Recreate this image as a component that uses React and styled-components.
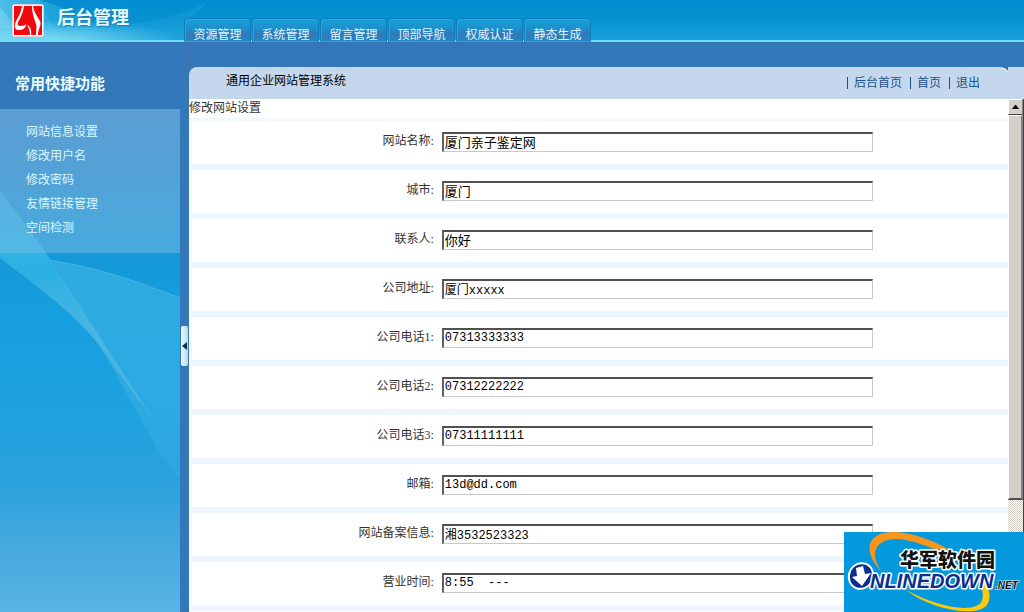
import React from "react";
import styled, { createGlobalStyle } from "styled-components";

const GlobalStyle = createGlobalStyle`
    * {
        box-sizing: border-box;
    }

    body {
        margin: 0;
        overflow: hidden;
        background: #3377b9;
        font-family: "Liberation Serif", "Noto Sans CJK SC", serif;
        font-size: 12px;
        line-height: 16px;
    }

    a {
        color: inherit;
        text-decoration: none;
    }
`;

const Page = styled.div`
    display: flex;
    flex-direction: column;
    height: 100vh;
`;

const Header = styled.header`
    position: relative;
    display: flex;
    flex: none;
    height: 42px;
    background: linear-gradient(#008ccf, #0892d3 50%, #18a2db);
    border-bottom: 2px solid #6fdcf8;
`;

const HeaderArt = styled.svg`
    position: absolute;
    top: 0;
    left: 0;
`;

const Brand = styled.div`
    position: relative;
    display: flex;
    gap: 12px;
    width: 184px;
    padding: 4px 0 0 12px;
`;

const BrandName = styled.h1`
    margin: 0;
    color: #e8fbff;
    font-size: 18px;
    line-height: 28px;
    font-weight: bold;
    text-shadow: 1px 1px 1px #1a7fb8;
`;

const Tabs = styled.nav`
    position: relative;
    display: flex;
    gap: 1px;
    height: 42px;
    padding-top: 18px;
`;

const Tab = styled.a`
    width: 67px;
    height: 24px;
    padding-top: 8px;
    border: 1px solid #0c7fbd;
    border-bottom-color: #2ba6d6;
    border-radius: 3px 3px 0 0;
    box-shadow: inset 1px 1px 0 #24a8d8;
    background: linear-gradient(#149fd6, #1f8fcc 45%, #3377b9 70%, #2487c4);
    color: #dff8ff;
    text-align: center;
`;

const Body = styled.div`
    display: flex;
    flex: 1;
    min-height: 0;
`;

const Sidebar = styled.aside`
    position: relative;
    flex: none;
    width: 180px;
    background: #3377b9;
`;

const SidebarArt = styled.svg`
    position: absolute;
    top: 67px;
    left: 0;
    width: 180px;
    height: calc(100% - 67px);
`;

const SidebarTitle = styled.h2`
    position: relative;
    height: 67px;
    margin: 0;
    padding: 30px 0 0 15px;
    color: #e8fbff;
    font-size: 15px;
    line-height: 24px;
`;

const Menu = styled.ul`
    position: relative;
    height: 144px;
    margin: 0;
    padding: 11px 0 0 26px;
    background: linear-gradient(#5b9dd3, rgba(120, 190, 228, 0.5));
    color: #d8f8ff;
    line-height: 24px;
    list-style: none;
`;

const Divider = styled.div`
    display: flex;
    flex: none;
    align-items: center;
    width: 9px;
    padding: 38px 0 0 1px;
    background: linear-gradient(90deg, #2f78c0, #3a76ae);
`;

const Collapse = styled.button`
    width: 7px;
    height: 40px;
    padding: 0;
    border: 0;
    border-radius: 2px;
    background: linear-gradient(90deg, #f0faff, #b5d8ee);
    line-height: 0;
`;

const Content = styled.main`
    display: flex;
    flex: 1;
    flex-direction: column;
    min-width: 0;
    padding-top: 25px;
`;

const TitleBar = styled.div`
    position: relative;
    display: flex;
    flex: none;
    justify-content: space-between;
    height: 32px;
    padding: 6px 44px 0 37px;
    border-top-left-radius: 8px;
    background: #c4d7ed;
`;

const TitleText = styled.h3`
    margin: 0;
    font-size: 12px;
    font-weight: normal;
`;

const Corner = styled.svg`
    position: absolute;
    top: 0;
    right: 16px;
`;

const QuickLinks = styled.nav`
    display: flex;
    gap: 8px;
    padding-top: 2px;
    color: #1d5288;

    a::before {
        content: "";
        display: inline-block;
        width: 1px;
        height: 12px;
        margin-right: 6px;
        background: #1d5288;
        vertical-align: -2px;
    }
`;

const Pane = styled.div`
    display: flex;
    flex: 1;
    min-height: 0;
    background: #fff;
`;

const Form = styled.form`
    flex: 1;
    overflow: hidden;
`;

const Caption = styled.div`
    height: 22px;
    border-bottom: 3px solid #f1f9fd;
    color: #333;
    line-height: 18px;
`;

const Rows = styled.div`
    border-left: 3px solid #f1f9fe;
`;

const Row = styled.div`
    display: grid;
    grid-template-columns: 30% 1fr;
    align-items: start;
    height: 49px;
    padding-top: 11px;
    border-bottom: 6px solid #edf5fd;
`;

const Label = styled.label`
    padding-right: 3px;
    color: #333;
    line-height: 18px;
    text-align: right;
`;

const Field = styled.input`
    width: 431px;
    max-width: 100%;
    height: 20px;
    margin-left: 5px;
    padding: 0 1px 2px;
    border: solid;
    border-width: 2px 1px 1px 2px;
    border-color: #505050 #c8c8c8 #c8c8c8 #606060;
    border-radius: 0;
    outline: 0;
    background: #fff;
    color: #000;
    font-family: "Liberation Mono", "Noto Sans CJK SC", monospace;
    font-size: ${props => (props.$hanzi ? "13px" : "12px")};
`;

const Scrollbar = styled.div`
    display: flex;
    flex: none;
    flex-direction: column;
    width: 16px;
    border-right: 1px solid #404040;
    background: repeating-conic-gradient(#d4d0c8 0 25%, #fff 0 50%) 0 0 / 2px 2px;
`;

const ScrollButton = styled.button`
    height: 16px;
    padding: 0;
    border: 1px solid;
    border-color: #fff #808080 #404040 #fff;
    background: #d4d0c8;
    line-height: 0;
`;

const Thumb = styled.div`
    height: 75%;
    border: solid;
    border-width: 1px 2px 2px 1px;
    border-color: #fff #808080 #505050 #fff;
    background: #d4d0c8;
`;

const Badge = styled.svg`
    position: fixed;
    right: 0;
    bottom: 0;
`;

const tabs = ["资源管理", "系统管理", "留言管理", "顶部导航", "权威认证", "静态生成"];

const menu = ["网站信息设置", "修改用户名", "修改密码", "友情链接管理", "空间检测"];

const fields = [
    { id: "name", label: "网站名称", value: "厦门亲子鉴定网" },
    { id: "city", label: "城市", value: "厦门" },
    { id: "contact", label: "联系人", value: "你好" },
    { id: "address", label: "公司地址", value: "厦门xxxxx" },
    { id: "tel1", label: "公司电话1", value: "07313333333" },
    { id: "tel2", label: "公司电话2", value: "07312222222" },
    { id: "tel3", label: "公司电话3", value: "07311111111" },
    { id: "email", label: "邮箱", value: "13d@dd.com" },
    { id: "record", label: "网站备案信息", value: "湘3532523323" },
    { id: "hours", label: "营业时间", value: "8:55  ---" }
];

const Logo = () => (
    <svg width="33" height="34" viewBox="0 0 33 34">
        <rect x="0.5" y="0.5" width="31" height="32" rx="2" fill="#fff" stroke="#e3cfd6" />
        <rect x="2" y="2" width="28" height="29" fill="#f00a0e" />
        <path
            d="M10 2h2C11 9 9 13 6 18c-1 3 0 4 3 4 2 0 4-1 5-2 0 4-3 6-7 6-3 0-5-2-4-6 2-6 6-10 7-18z"
            fill="#fff"
        />
        <path d="M20 2h1c1 6 4 10 7 15 2 4-2 8-2 14h-2c0-5 1-8 0-11-2-6-4-11-4-18z" fill="#fff" />
        <path d="M15 21c3 1 5 5 4 10h-1c0-4-1-7-3-10z" fill="#fff" />
    </svg>
);

const HeaderSwirl = () => (
    <HeaderArt width="260" height="40" viewBox="0 0 260 40">
        <defs>
            <linearGradient id="glow" x1="0" y1="0" x2="1" y2="0">
                <stop offset="0" stopColor="#7fdcf5" stopOpacity="0.6" />
                <stop offset="0.5" stopColor="#52c8ec" stopOpacity="0.6" />
                <stop offset="1" stopColor="#3fbce6" stopOpacity="0.5" />
            </linearGradient>
            <radialGradient id="floor" cx="0.3" cy="1" r="0.7">
                <stop offset="0" stopColor="#8fe4f8" stopOpacity="0.8" />
                <stop offset="1" stopColor="#8fe4f8" stopOpacity="0" />
            </radialGradient>
            <linearGradient id="fade" x1="0" y1="0" x2="1" y2="0">
                <stop offset="0" stopColor="#40c0e8" stopOpacity="0.5" />
                <stop offset="1" stopColor="#2bb0e0" stopOpacity="0.1" />
            </linearGradient>
        </defs>
        <path d="M0 8C8 15 16 28 22 40H0z" fill="#a6ecfa" opacity="0.4" />
        <path d="M0 0h40c5 14 12 27 26 40H0z" fill="url(#glow)" />
        <path d="M40 0c22 6 56 22 78 40H66C52 27 45 14 40 0z" fill="url(#fade)" />
        <path d="M208 0c-4 8-14 15-24 20V40H0V28c90 0 170 0 208-28z" fill="#35b4e2" opacity="0.2" />
        <path d="M0 12h180v28H0z" fill="url(#floor)" />
    </HeaderArt>
);

const SidebarSwirl = () => (
    <SidebarArt viewBox="0 0 180 503" preserveAspectRatio="none">
        <defs>
            <linearGradient id="sky" x1="0" y1="0" x2="0" y2="1">
                <stop offset="0" stopColor="#1f8fd0" />
                <stop offset="0.3" stopColor="#1498d7" />
                <stop offset="0.4" stopColor="#169fde" />
                <stop offset="0.6" stopColor="#1ea2df" />
                <stop offset="0.74" stopColor="#2ba1dc" />
                <stop offset="0.9" stopColor="#4bacdf" />
                <stop offset="1" stopColor="#57b4e6" />
            </linearGradient>
            <linearGradient id="hill" x1="0" y1="0" x2="0" y2="1">
                <stop offset="0" stopColor="#30ade1" stopOpacity="0.9" />
                <stop offset="0.6" stopColor="#34ade2" stopOpacity="0.7" />
                <stop offset="1" stopColor="#38b0e2" stopOpacity="0.3" />
            </linearGradient>
            <linearGradient id="beam" x1="0" y1="0" x2="0" y2="1">
                <stop offset="0" stopColor="#38c4ee" />
                <stop offset="0.35" stopColor="#2fb4e4" />
                <stop offset="0.6" stopColor="#50b8e4" />
                <stop offset="1" stopColor="#5cbce6" stopOpacity="0.5" />
            </linearGradient>
        </defs>
        <path d="M0 0h180v503H0z" fill="url(#sky)" />
        <path d="M48 151c50 7 90 22 132 38v182c-16-20-30-42-44-70L96 230z" fill="url(#hill)" />
        <path d="M48 151c50 7 90 22 132 38" fill="none" stroke="#52bce7" opacity="0.7" />
        <path d="M0 81l46 63 50 78 57 88c-33-42-51-72-65-87C62 195 30 172 0 149z" fill="url(#beam)" opacity="0.85" />
    </SidebarArt>
);

const Watermark = () => (
    <Badge width="180" height="80" viewBox="0 0 180 80" role="img" aria-label="华军软件园">
        <rect width="180" height="80" fill="#0498dc" />
        <path d="M38 40C20 22 20 1 48 0c20 0 40 8 56 17h-14C72 10 56 5 44 8 28 12 28 26 38 40z" fill="#f7951d" />
        <path d="M62 58c30 16 60 22 72 15 9-5 4-22-4-34 14 10 19 24 13 34-10 13-56 5-81-15z" fill="#fdc70c" />
        <text
            x="56"
            y="35"
            fill="#111"
            stroke="#fff"
            strokeWidth="3"
            strokeLinejoin="round"
            paintOrder="stroke"
            fontFamily="'Noto Sans CJK SC', sans-serif"
            fontSize="19"
            fontWeight="900"
        >
            华军软件园
        </text>
        <ellipse cx="17" cy="44" rx="13" ry="14" fill="#fff" transform="rotate(25 17 44)" />
        <ellipse cx="17" cy="44" rx="11" ry="12" fill="#0b2f90" transform="rotate(25 17 44)" />
        <path d="M12 36l7-2 2 8 6-1-9 13-10-9 5-1z" fill="#fff" />
        <text
            x="26"
            y="56"
            fill="#0b2f90"
            stroke="#fff"
            strokeWidth="3"
            strokeLinejoin="round"
            paintOrder="stroke"
            fontFamily="'Liberation Sans', sans-serif"
            fontSize="20"
            fontWeight="bold"
            fontStyle="italic"
        >
            NLINEDOWN
        </text>
        <text
            x="151"
            y="57"
            fill="#111"
            stroke="#fff"
            strokeWidth="1"
            paintOrder="stroke"
            fontFamily="'Liberation Sans', sans-serif"
            fontSize="10"
            fontWeight="bold"
            fontStyle="italic"
        >
            .NET
        </text>
    </Badge>
);

const App = () => {
    return (
        <Page>
            <GlobalStyle />
            <Header>
                <HeaderSwirl />
                <Brand>
                    <Logo />
                    <BrandName>后台管理</BrandName>
                </Brand>
                <Tabs>
                    {tabs.map(tab => (
                        <Tab key={tab} href="#">
                            {tab}
                        </Tab>
                    ))}
                </Tabs>
            </Header>
            <Body>
                <Sidebar>
                    <SidebarSwirl />
                    <SidebarTitle>常用快捷功能</SidebarTitle>
                    <Menu>
                        {menu.map(item => (
                            <li key={item}>
                                <a href="#">{item}</a>
                            </li>
                        ))}
                    </Menu>
                </Sidebar>
                <Divider>
                    <Collapse type="button" aria-label="收起">
                        <svg width="5" height="8" viewBox="0 0 5 8">
                            <path d="M5 0v8L0 4z" fill="#0d2f4a" />
                        </svg>
                    </Collapse>
                </Divider>
                <Content>
                    <TitleBar>
                        <TitleText>通用企业网站管理系统</TitleText>
                        <QuickLinks>
                            <a href="#">后台首页</a>
                            <a href="#">首页</a>
                            <a href="#">退出</a>
                        </QuickLinks>
                        <Corner width="8" height="6" viewBox="0 0 8 6">
                            <path d="M0 0h8v5C7 2 4 1 0 0z" fill="#2f6ea8" />
                            <path d="M1 1c3 0 6 1 7 4" fill="none" stroke="#fff" />
                        </Corner>
                    </TitleBar>
                    <Pane>
                        <Form>
                            <Caption>修改网站设置</Caption>
                            <Rows>
                                {fields.map(field => (
                                    <Row key={field.id}>
                                        <Label htmlFor={field.id}>{field.label}:</Label>
                                        <Field
                                            id={field.id}
                                            type="text"
                                            defaultValue={field.value}
                                            $hanzi={!/[0-9a-z]/.test(field.value)}
                                        />
                                    </Row>
                                ))}
                            </Rows>
                        </Form>
                        <Scrollbar>
                            <ScrollButton type="button" aria-label="向上滚动">
                                <svg width="7" height="4" viewBox="0 0 7 4">
                                    <path d="M0 4h7L4 0H3z" fill="#000" />
                                </svg>
                            </ScrollButton>
                            <Thumb />
                        </Scrollbar>
                    </Pane>
                </Content>
            </Body>
            <Watermark />
        </Page>
    );
};

export default App;
